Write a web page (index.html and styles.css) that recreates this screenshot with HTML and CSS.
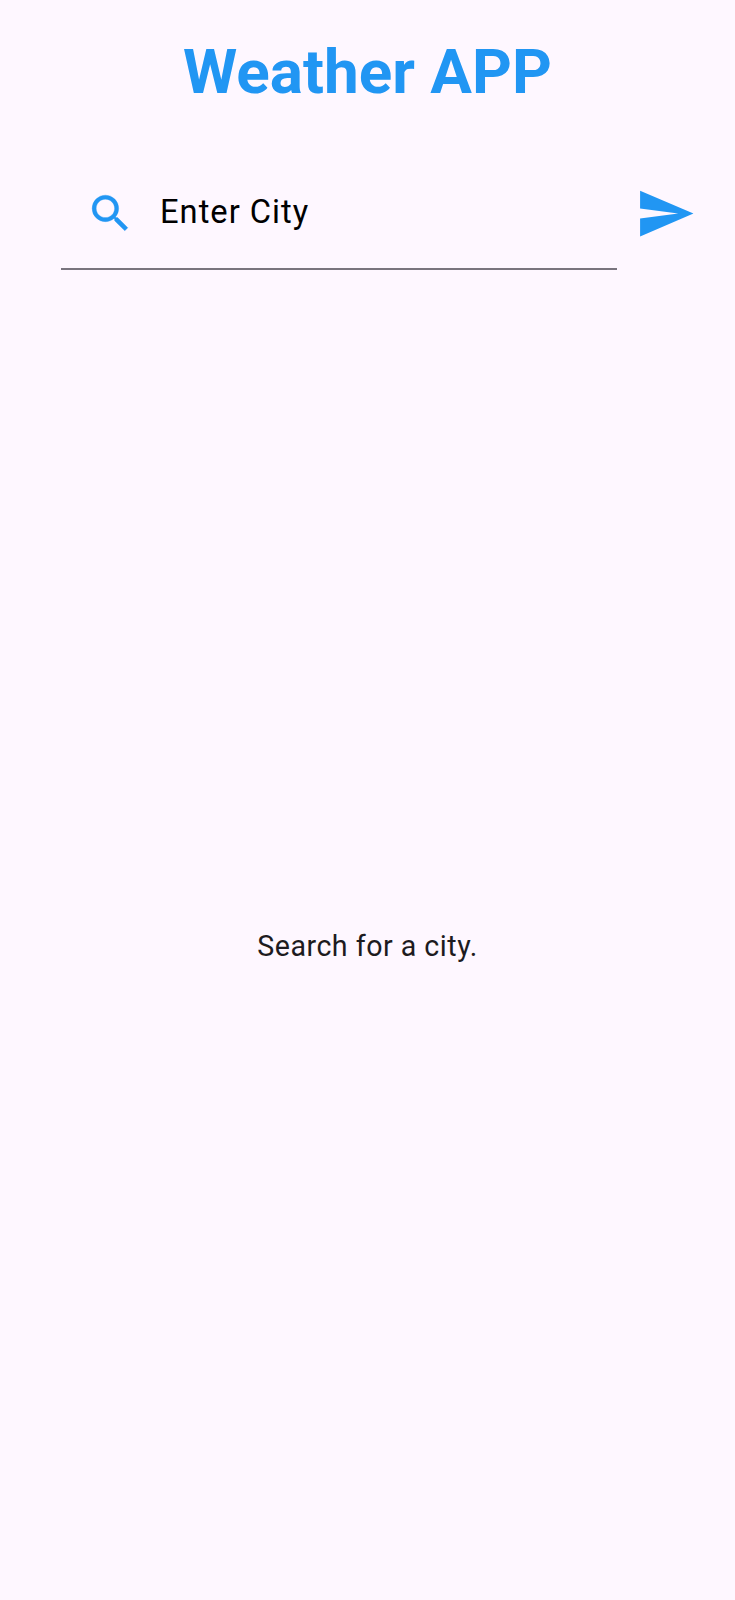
FILE: index.html
```html
<!DOCTYPE html>
<html lang="en">
<head>
<meta charset="utf-8">
<title>Weather APP</title>
<link rel="stylesheet" href="styles.css">
</head>
<body>
<main class="screen">
  <h1 class="title">Weather APP</h1>
  <div class="search-row">
    <div class="field">
      <svg class="search-icon" viewBox="0 0 24 24"><path d="M15.5 14h-.79l-.28-.27A6.47 6.47 0 0 0 16 9.5 6.5 6.5 0 1 0 9.5 16c1.61 0 3.09-.59 4.23-1.57l.27.28v.79l5 4.99L20.49 19l-4.99-5zm-6 0C7.01 14 5 11.99 5 9.5S7.01 5 9.5 5 14 7.01 14 9.5 11.99 14 9.5 14z"/></svg>
      <span class="label">Enter City</span>
    </div>
    <svg class="send-icon" viewBox="0 0 24 24"><path d="M2.01 21 23 12 2.01 3 2 10l15 2-15 2z"/></svg>
  </div>
  <div class="content"><p class="message">Search for a city.</p></div>
</main>
</body>
</html>
```
FILE: styles.css
```css
* { box-sizing: border-box; }
body { margin: 0; background: #fef7ff; font-family: Roboto, "Liberation Sans", sans-serif; }
.screen { height: 1600px; display: flex; flex-direction: column; }
.title { margin: 36px 0 0; line-height: 72px; font-size: 62px; font-weight: 700; color: #2196f3; text-align: center; }
.search-row { display: flex; align-items: flex-start; margin-top: 47px; padding-left: 61px; }
.field { display: flex; align-items: center; width: 555.5px; height: 115px; padding: 1px 0 0 25px; border-bottom: 2px solid #79747e; }
.search-icon { width: 49px; height: 49px; margin-top: 2px; fill: #2196f3; stroke: #2196f3; stroke-width: .15; stroke-linejoin: round; }
.label { margin-left: 25px; font-size: 32.7px; line-height: 40px; letter-spacing: 1px; color: #000; }
.send-icon { width: 61px; height: 61px; margin: 27.5px 0 0 18.5px; fill: #2196f3; }
.content { flex: 1; display: flex; justify-content: center; padding-top: 656px; }
.message { margin: 0; font-size: 28.6px; line-height: 40px; letter-spacing: .5px; color: #1d1b20; }
```
